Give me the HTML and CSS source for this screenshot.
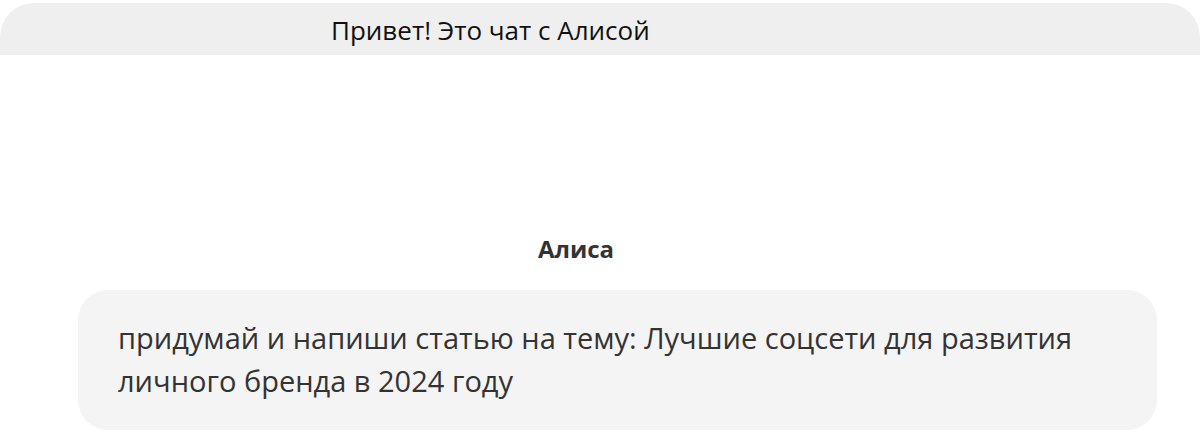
FILE: index.html
```html
<!DOCTYPE html>
<html lang="ru">
<head>
<meta charset="utf-8">
<link rel="stylesheet" href="styles.css">
</head>
<body>
<div class="page">
  <header class="topbar">
    <div class="topbar-title">Привет! Это чат с Алисой</div>
  </header>
  <main class="chat">
    <div class="author">Алиса</div>
    <div class="bubble">
      <p class="bubble-text">придумай и напиши статью на тему: Лучшие соцсети для развития личного бренда в 2024 году</p>
    </div>
  </main>
</div>
</body>
</html>
```

FILE: styles.css
```css
* { box-sizing: border-box; }
html, body { margin: 0; padding: 0; background: #ffffff; }
.page {
  width: 1200px;
  height: 438px;
  overflow: hidden;
  padding-top: 3px;
}
.topbar {
  height: 52px;
  background: #efefef;
  border-radius: 34px 34px 0 0;
  padding-left: 331px;
  display: flex;
  align-items: center;
}
.topbar-title {
  font-family: "Open Sans", sans-serif;
  font-size: 26px;
  line-height: 34px;
  color: #111111;
  padding-top: 2px;
}
.chat {
  padding: 0 43px 0 78px;
}
.author {
  margin-top: 180px;
  text-align: center;
  font-family: "Open Sans", sans-serif;
  font-weight: 700;
  font-size: 24px;
  color: #333333;
  line-height: 28px;
  width: 996px;
}
.bubble {
  margin-top: 27px;
  background: #f4f4f4;
  border-radius: 30px;
  padding: 26px 40px 28px 40px;
  width: 1079px;
}
.bubble-text {
  margin: 0;
  font-family: "Open Sans", sans-serif;
  font-size: 29px;
  line-height: 43px;
  color: #333333;
}
```
